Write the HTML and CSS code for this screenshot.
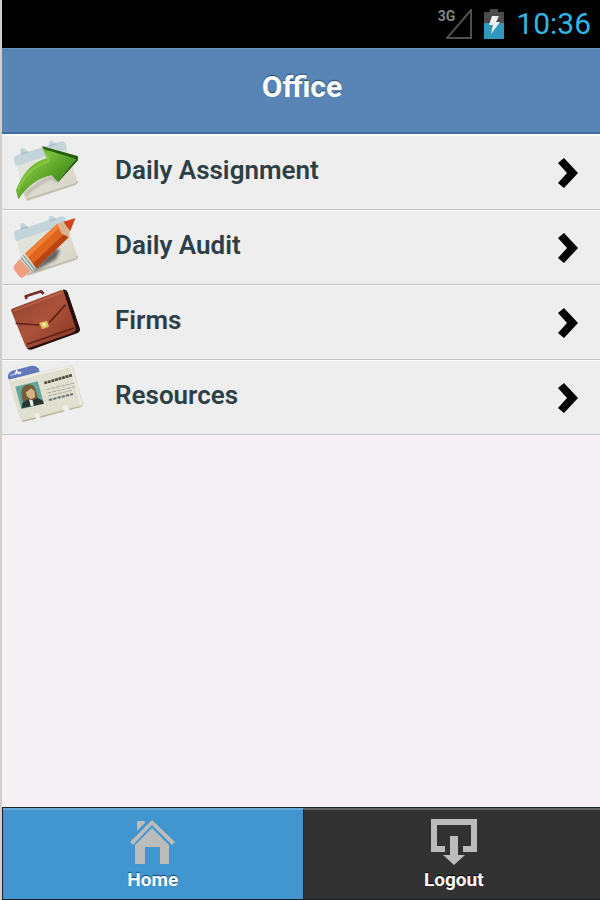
FILE: index.html
```html
<!DOCTYPE html>
<html lang="en">
<head>
<meta charset="utf-8">
<meta name="viewport" content="width=device-width, initial-scale=1">
<title>Office</title>
<link rel="stylesheet" href="styles.css">
</head>
<body>
<svg class="defs" aria-hidden="true">
  <defs>
    <linearGradient id="arrow" x1="0" y1="0" x2="1" y2="1"><stop offset="0" stop-color="#2f7d12"/><stop offset=".35" stop-color="#79bd38"/><stop offset=".65" stop-color="#48941c"/><stop offset="1" stop-color="#286f0b"/></linearGradient>
    <linearGradient id="leather" x1="0" y1="0" x2="1" y2="1"><stop offset="0" stop-color="#8e402c"/><stop offset=".5" stop-color="#ac523b"/><stop offset="1" stop-color="#823322"/></linearGradient>
    <linearGradient id="paper" x1="0" y1="0" x2="1" y2="1"><stop offset="0" stop-color="#e6e9e4"/><stop offset="1" stop-color="#d5d2c2"/></linearGradient>
    <filter id="soft"><feGaussianBlur stdDeviation="4"/></filter>
    <g id="calendar">
      <path d="M48 96 188 50Q196 48 199 56L232 152Q234 160 226 165L88 212Q79 214 75 205Z" fill="url(#paper)"/>
      <path d="M80 209 224 163Q232 160 232 154" fill="none" stroke="#bfbbae" stroke-width="5"/>
      <path d="M42 88Q40 80 50 76L62 72Q58 56 66 54L74 56 84 66 146 46Q146 31 156 32L166 40 184 34Q194 32 197 42L201 57 52 107Q46 108 45 102Z" fill="#c3d4da"/>
      <path d="M62 72 84 66M148 48 168 41" stroke="#a9bfc7" stroke-width="4"/>
    </g>
  </defs>
</svg>
<div class="app">
  <div class="status">
    <svg class="signal" viewBox="0 0 26 30" role="img" aria-label="No signal"><path d="M25 1V29H1Z" fill="none" stroke="#505050" stroke-width="2"/></svg>
    <span class="network">3G</span>
    <svg class="battery" viewBox="0 0 20 30" role="img" aria-label="Charging"><path d="M6 0H14V3H20V30H0V3H6Z" fill="#4b4b4b"/><path d="M0 14H20V30H0Z" fill="#3299bd"/><path d="M8 7H15L12 13H16L7 25 9 16H5Z" fill="#f2f2f2"/></svg>
    <time class="clock">10:36</time>
  </div>
  <header class="header"><h1>Office</h1></header>
  <main class="content">
    <ul class="list">
      <li><a class="row" href="#assignment">
        <svg class="picture" viewBox="9 15 249 222" aria-hidden="true">
          <use href="#calendar"/>
          <path d="M75 196Q110 160 155 142L177 157" fill="none" stroke="#7c6f62" stroke-width="9" opacity=".4" filter="url(#soft)"/>
          <path d="M126 49 234 79 173 155 155 136Q98 145 55 208L48 181Q78 101 140 85Z" fill="url(#arrow)"/>
          <path d="M126 49 234 79 230 88 132 57ZM173 155 234 79V91L177 154Z" fill="#245f0c"/>
          <path d="M55 179Q82 113 147 94L137 64" fill="none" stroke="#92cd50" stroke-width="6" opacity=".65"/>
        </svg>
        <span class="label">Daily Assignment</span>
        <svg class="chevron" viewBox="0 0 20 30" aria-hidden="true"><path d="M6 0 20 15 6 30 0 25 9 15 0 5Z"/></svg>
      </a></li>
      <li><a class="row" href="#audit">
        <svg class="picture" viewBox="9 6 249 222" aria-hidden="true">
          <use href="#calendar" y="-9"/>
          <path d="M92 190 165 122 180 125 168 153 112 185Z" fill="#333" opacity=".7" filter="url(#soft)"/>
          <path d="M75 137 172 47 206 88 108 181Z" fill="#df651e"/>
          <path d="M75 137 172 47 181 57 84 148Z" fill="#f08038"/>
          <path d="M98 168 195 76 206 88 108 181Z" fill="#b74412"/>
          <path d="M172 47 194 40 210 67 206 88 184 76Z" fill="#dcb48e"/>
          <path d="M191 41 226 30 211 69 201 57Z" fill="#cf421a"/>
          <path d="M75 137 108 181 91 189 59 153Z" fill="#d9dfdb"/>
          <path d="M70 142 103 183M63 149 96 188" stroke="#829b99" stroke-width="4"/>
          <path d="M59 153 91 189 71 207Q63 213 56 203L43 186Q38 179 44 171Z" fill="#ef9e80"/>
        </svg>
        <span class="label">Daily Audit</span>
        <svg class="chevron" viewBox="0 0 20 30" aria-hidden="true"><path d="M6 0 20 15 6 30 0 25 9 15 0 5Z"/></svg>
      </a></li>
      <li><a class="row" href="#firms">
        <svg class="picture" viewBox="9 6 249 222" aria-hidden="true">
          <path d="M80 48 77 40 124 25 131 33" fill="none" stroke="#713023" stroke-width="8" stroke-linejoin="round"/>
          <path d="M188 20Q199 17 203 28L240 137Q242 144 233 150L94 200Q85 202 80 195L225 143Z" fill="#260e0d"/>
          <path d="M36 77 184 21Q189 20 192 29L228 138 217 150 86 195Q79 196 76 188L34 85Q32 79 36 77Z" fill="url(#leather)"/>
          <path d="M47 121 117 126M148 119 197 65" fill="none" stroke="#612317" stroke-width="5"/>
          <path d="M41 84 184 29" stroke="#bd6b51" stroke-width="4"/>
          <path d="M81 184 222 135" stroke="#5e2016" stroke-width="5"/>
          <path d="M118 119 141 113 147 131 126 139Z" fill="#dfc168"/><path d="M128 121 136 119 138 127 130 130Z" fill="#fff1a6"/>
        </svg>
        <span class="label">Firms</span>
        <svg class="chevron" viewBox="0 0 20 30" aria-hidden="true"><path d="M6 0 20 15 6 30 0 25 9 15 0 5Z"/></svg>
      </a></li>
      <li><a class="row" href="#resources">
        <svg class="picture" viewBox="9 6 249 222" aria-hidden="true">
          <path d="M24 60Q22 45 35 39L91 24Q108 21 115 31L119 41 28 66Z" fill="#6178bb"/><path d="M30 52 64 43" stroke="#9faddb" stroke-width="5"/><path d="M46 49 50 38 56 47 63 43" fill="none" stroke="#fff" stroke-width="4"/>
          <path d="M25 65 211 21Q217 20 219 27L250 137Q252 145 244 147L207 157 202 140 187 144 193 161 120 180 116 164 103 168 108 183 72 192Q65 193 62 185Z" fill="#e1dfcf"/>
          <path d="M30 68 211 26 243 137" fill="none" stroke="#f1efe3" stroke-width="5"/>
          <path d="M66 190 107 180M121 177 193 158M208 154 244 145" stroke="#bab59f" stroke-width="4"/>
          <path d="M46 86 113 70 132 137 64 153Z" fill="#63a79a"/>
          <path d="M68 129Q56 84 82 80 101 75 108 98L116 128 96 135Z" fill="#765c39"/>
          <path d="M77 102Q86 99 93 91L104 99 105 117 94 124 82 116Z" fill="#d6b383"/>
          <path d="M65 151 68 133 88 123 98 126 113 120 129 128 131 137Z" fill="#293433"/><path d="M87 124 98 127 101 143 92 144Z" fill="#eee"/>
          <path d="M133 75 217 51" stroke="#4f4a40" stroke-width="8" stroke-dasharray="9 2"/>
          <path d="M139 95 224 75M142 105 226 86M145 114 216 97" stroke="#a8aaa4" stroke-width="3" stroke-dasharray="12 3"/>
          <path d="M147 126 219 108" stroke="#68737d" stroke-width="6" stroke-dasharray="10 3"/>
        </svg>
        <span class="label">Resources</span>
        <svg class="chevron" viewBox="0 0 20 30" aria-hidden="true"><path d="M6 0 20 15 6 30 0 25 9 15 0 5Z"/></svg>
      </a></li>
    </ul>
  </main>
  <nav class="tabs" aria-label="Main">
    <a class="tab active" href="#home" aria-current="page">
      <svg class="tab-icon" viewBox="0 0 46 46" aria-hidden="true"><path d="M7 2H15V4L7 12ZM22 1 45 23 42 26 22 6 3 26 0 23ZM22 9 39 26V45H30V28H15V45H5V26Z"/></svg>
      <span>Home</span>
    </a>
    <a class="tab" href="#logout">
      <svg class="tab-icon" viewBox="0 0 46 46" aria-hidden="true"><path d="M0 0H46V33H32V27H40V6H6V27H14V33H0ZM19 17H27V36H34L23 46 12 36H19Z"/></svg>
      <span>Logout</span>
    </a>
  </nav>
</div>
</body>
</html>
```
FILE: styles.css
```css
* { box-sizing: border-box; }
body {
  margin: 0;
  font-family: Roboto, "Liberation Sans", sans-serif;
  background: #f6f1f5;
}
.defs { position: absolute; width: 0; height: 0; }
.app {
  display: flex;
  flex-direction: column;
  min-height: 100vh;
  overflow-x: hidden;
  border-left: 2px solid #d2cec8;
}
.status {
  display: flex;
  align-items: center;
  justify-content: flex-end;
  height: 48px;
  padding-right: 9px;
  background: #000;
}
.signal { order: 1; width: 26px; height: 30px; }
.network {
  align-self: flex-start;
  margin: 8px -9px 0 0;
  font-size: 14px;
  line-height: 16px;
  font-weight: 700;
  color: #858585;
}
.battery { order: 2; width: 20px; height: 30px; margin: 0 12px; }
.clock { order: 3; font-size: 30px; line-height: 48px; color: #33b5e5; }
.header {
  display: flex;
  justify-content: center;
  height: 86px;
  padding: 20px 0 0 2px;
  background: #5985b6;
  border-top: 1px solid #6e95c0;
  border-bottom: 2px solid #3d6c9f;
}
h1 {
  margin: 0;
  font-size: 30px;
  line-height: 36px;
  font-weight: 700;
  color: #fff;
  text-shadow: 0 -1px 1px #244a73;
}
.content { flex: 1; }
.list {
  margin: 0;
  padding: 0;
  list-style: none;
  border-top: 1px solid #fff;
}
.row {
  display: flex;
  align-items: center;
  height: 75px;
  padding: 0 22px 0 1px;
  background: #eee;
  border-bottom: 1px solid #c5c5c5;
  box-shadow: inset 0 1px #fafafa;
  color: #2c3e46;
  text-decoration: none;
}
.picture { width: 83px; height: 74px; }
.label {
  flex: 1;
  padding: 0 0 4px 29px;
  font-size: 26px;
  line-height: 32px;
  font-weight: 600;
}
.chevron { width: 20px; height: 30px; margin-top: 2px; }
.tabs {
  display: grid;
  grid-template-columns: 1fr 1fr;
  height: 93px;
  margin-right: -4px;
  border: 1px solid #1d2226;
  border-width: 1px 0 1px 1px;
}
.tab {
  display: flex;
  flex-direction: column;
  align-items: center;
  padding-top: 9px;
  background: #323232;
  border-top: 2px solid #626262;
  color: #fff;
  font-size: 19px;
  line-height: 24px;
  font-weight: 700;
  text-decoration: none;
  text-shadow: 0 -1px 1px #000;
}
.tab.active {
  background: #4196cf;
  border-top-color: #64a9d6;
  border-right: 1px solid #1d2226;
  text-shadow: 0 -1px 1px #14466c;
}
.tab-icon { width: 46px; height: 46px; margin-bottom: 3px; fill: #bcbcbc; }
```
